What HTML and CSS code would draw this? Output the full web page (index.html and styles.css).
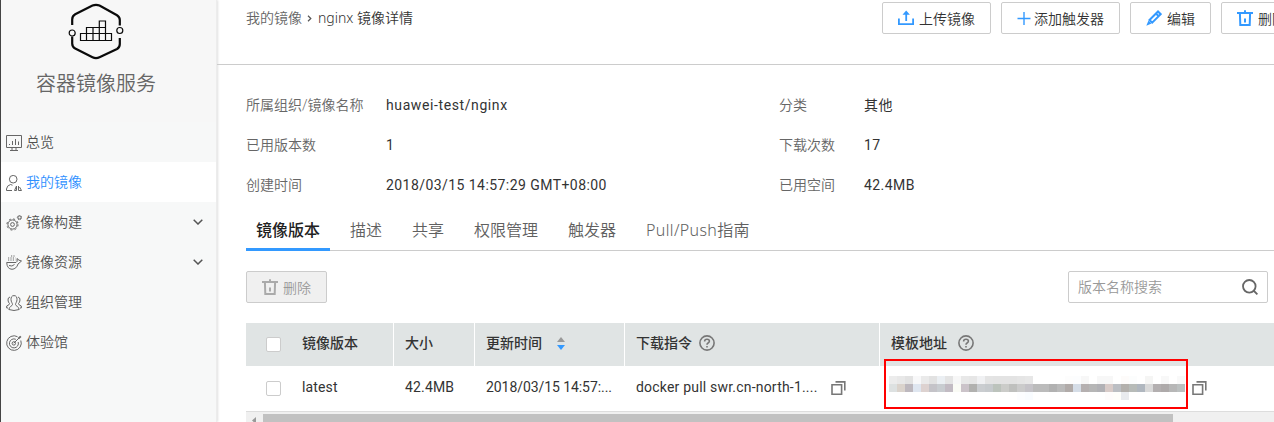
FILE: index.html
```html
<!DOCTYPE html>
<html lang="zh-CN">
<head>
<meta charset="utf-8">
<title>容器镜像服务</title>
<link rel="stylesheet" href="styles.css">
</head>
<body>
<div class="app">
  <aside class="sidebar">
    <div class="brand">
      <svg class="brand-logo" width="56" height="58" viewBox="0 0 56 58" fill="none" stroke="#0a0a0a">
        <path stroke-width="2.2" d="M4.2 22V16.5Q4.2 13 7.2 11.2L24.5 2.6Q28 1 31.5 2.6L49 12.2Q51.8 14 51.8 17V22.5M51.8 35V41Q51.8 44.500 49 46L31.500 54.200Q28 56 24.500 54.200L7.200 45.500Q4.200 44 4.200 40.500V33.500"/>
        <circle cx="4.200" cy="30" r="3" stroke-width="1.200"/>
        <circle cx="51.800" cy="27.500" r="3" stroke-width="1.200"/>
        <path stroke-width="1.200" d="M12.500 30.500H43.500V37.500H12.500ZM18.500 37.500V24.500H37.500V37.500M25 24.500V37.500M31.300 37.500V18H37.500V24.500"/>
      </svg>
      <h1 class="brand-name">容器镜像服务</h1>
    </div>
    <nav class="menu">
      <a class="menu-item">
        <svg class="menu-icon" viewBox="0 0 16 16"><path d="M.5.500H15.500V12.500H.5ZM4 15.500H12M6 12.500V15.500M10 12.500V15.500M3.500 10V9M6.500 10V6M9.500 10V4M12.500 10V6.500"/></svg>
        <span>总览</span>
      </a>
      <a class="menu-item active">
        <svg class="menu-icon" viewBox="0 0 16 16"><path d="M11 4.200A3.800 3.800 0 1 1 3.400 4.200A3.800 3.800 0 1 1 11 4.200M.5 15.500V14Q.8 10.500 4.500 9.500L6.500 10.200M.5 15.500H6M8.500 15.500L10.500 11V15.500ZM12.500 11V15.500H15.500L13.500 12"/></svg>
        <span>我的镜像</span>
      </a>
      <a class="menu-item">
        <svg class="menu-icon" viewBox="0 0 16 16"><circle cx="6.500" cy="9.500" r="4.600"/><circle cx="6.500" cy="9.500" r="1.900"/><circle cx="6.500" cy="9.500" r="5.600" stroke-dasharray="2 2.400"/><circle cx="13.500" cy="2.500" r="1.500"/><circle cx="13.500" cy="2.500" r="2.200" stroke-dasharray="1 .8"/></svg>
        <span>镜像构建</span>
        <svg class="menu-arrow" viewBox="0 0 10 6"><path d="M.7.700L5 5L9.300.700"/></svg>
      </a>
      <a class="menu-item">
        <svg class="menu-icon" viewBox="0 0 16 16"><path d="M.7 7.500H10Q11.800 7 11 3.500L13 5.200L15.500 6L12 9Q10.500 14 6 14.300Q1 14 .7 7.500ZM3 10.500Q6 12 8.500 9.500"/><path stroke-dasharray="1.200 1.200" d="M2 5H9.500M2 3H9.500M5 1H9.500"/></svg>
        <span>镜像资源</span>
        <svg class="menu-arrow" viewBox="0 0 10 6"><path d="M.7.700L5 5L9.300.700"/></svg>
      </a>
      <a class="menu-item">
        <svg class="menu-icon" viewBox="0 0 16 16"><path d="M8 .6C5.500.600 5 2.500 5 4.500C5 7 6.500 8 6.500 9.500C6.500 11 3 11.500 2.800 14.500Q8 16.500 13.200 14.500C13 11.500 9.500 11 9.500 9.500C9.500 8 11 7 11 4.500C11 2.500 10.500.6 8 .6ZM4 2Q1.800 2.500 2 5Q2.200 7.500 3.500 8.500Q3.500 10 .7 11V13H2M12 2Q14.200 2.500 14 5Q13.800 7.500 12.500 8.500Q12.500 10 15.300 11V13H14"/></svg>
        <span>组织管理</span>
      </a>
      <a class="menu-item">
        <svg class="menu-icon" viewBox="0 0 16 16"><path d="M11.500 1.700A7.300 7.300 0 1 0 14.800 5.500M9.800 4.300A4.500 4.500 0 1 0 12.200 7M7.800 8.200L13 3"/><circle cx="7.800" cy="8.400" r="1.700"/><path stroke-width="1.800" d="M12.300 3.700L14.800 1.300"/></svg>
        <span>体验馆</span>
      </a>
    </nav>
  </aside>

  <main class="content">
    <header class="topbar">
      <div class="breadcrumb">
        <a class="crumb">我的镜像</a>
        <svg class="crumb-sep" viewBox="0 0 5 7"><path d="M1 .8L3.800 3.500L1 6.200"/></svg>
        <span>nginx 镜像详情</span>
      </div>
      <div class="actions">
        <button class="btn"><svg class="btn-icon" viewBox="0 0 16 16"><path stroke-width="1.800" d="M.9 8.500V14.100H15.100V8.500M8.200 11V2.500"/><path class="solid" d="M8.200.500L4.500 4.800H11.900Z"/></svg>上传镜像</button>
        <button class="btn"><svg class="btn-icon plus" viewBox="0 0 14 16"><path stroke-width="1.400" d="M.5 8.500H13.500M7 2V15"/></svg>添加触发器</button>
        <button class="btn"><svg class="btn-icon" viewBox="0 0 16 16"><path stroke-width="2" d="M3.500 10L12 1.500L14.700 4.200L6.200 12.700ZM10 3.500L12.700 6.200"/><path class="solid" d="M2.500 10.500L5.500 13.500L.3 15.800Z"/></svg>编辑</button>
        <button class="btn"><svg class="btn-icon" viewBox="0 0 16 16"><path stroke-width="2" d="M0 2.900H16M8 .2V3M2.900 3L3.300 15H12.700L13.100 3M8 8.500V12.500"/></svg>删除</button>
      </div>
    </header>

    <section class="info">
      <span class="label">所属组织/镜像名称</span><span class="value name">huawei-test/nginx</span><span class="label">分类</span><span class="value">其他</span>
      <span class="label">已用版本数</span><span class="value">1</span><span class="label">下载次数</span><span class="value">17</span>
      <span class="label">创建时间</span><span class="value">2018/03/15 14:57:29 GMT+08:00</span><span class="label">已用空间</span><span class="value">42.4MB</span>
    </section>

    <div class="tabs">
      <a class="tab selected">镜像版本</a><a class="tab">描述</a><a class="tab">共享</a><a class="tab">权限管理</a><a class="tab">触发器</a><a class="tab guide">Pull/Push指南</a>
    </div>

    <div class="toolbar">
      <button class="btn disabled"><svg class="btn-icon" viewBox="0 0 16 16"><path stroke-width="2" d="M0 2.900H16M8 .2V3M2.900 3L3.300 15H12.700L13.100 3M8 8.500V12.500"/></svg>删除</button>
      <div class="search">
        <span>版本名称搜索</span>
        <svg class="search-icon" viewBox="0 0 16 16"><circle cx="7.300" cy="7.300" r="6.300"/><path d="M11.500 11.500L15.400 15.400"/></svg>
      </div>
    </div>

    <div class="table">
      <div class="row head">
        <div class="cell"><i class="checkbox"></i>镜像版本</div>
        <div class="cell">大小</div>
        <div class="cell">更新时间<svg class="sort" viewBox="0 0 8 13"><path fill="#999" d="M4 0L8 5H0Z"/><path fill="#3399ff" d="M0 8H8L4 13Z"/></svg></div>
        <div class="cell">下载指令<svg class="help" viewBox="0 0 16 16"><circle cx="8" cy="8" r="7.100"/><path d="M5.600 6.400Q5.600 4.200 8 4.200Q10.400 4.200 10.400 6.100Q10.400 7.300 9.100 8Q8 8.600 8 9.700M8 10.900V12.500"/></svg></div>
        <div class="cell">模板地址<svg class="help wide" viewBox="0 0 16 16"><circle cx="8" cy="8" r="7.100"/><path d="M5.600 6.400Q5.600 4.200 8 4.200Q10.400 4.200 10.400 6.100Q10.400 7.300 9.100 8Q8 8.600 8 9.700M8 10.900V12.500"/></svg></div>
      </div>
      <div class="row body">
        <div class="cell"><i class="checkbox"></i>latest</div>
        <div class="cell">42.4MB</div>
        <div class="cell date">2018/03/15 14:57:...</div>
        <div class="cell"><span class="command">docker pull swr.cn-north-1....</span><svg class="copy" viewBox="0 0 15 14"><path d="M1 3.800H10.600V13.200H1ZM4.500.900H13.800V9.500"/></svg></div>
        <div class="cell address">
          <svg class="mosaic" viewBox="0 0 37 3" shape-rendering="crispEdges"></svg>
          <svg class="copy" viewBox="0 0 15 14"><path d="M1 3.800H10.600V13.200H1ZM4.500.900H13.800V9.500"/></svg>
          <div class="highlight"></div>
        </div>
      </div>
      <div class="scrollbar"><svg class="scroll-arrow" viewBox="0 0 4 7"><path d="M4 0V7L0 3.500Z"/></svg><div class="thumb"></div></div>
    </div>
  </main>
</div>
<script src="mosaic.js"></script>
</body>
</html>
```
FILE: mosaic.js
```js
// Pixelated address: one colour per block, "-" leaves the block empty.
const rows = [
  "ececec e8e8e8 e2e2e2 f8f8f9 eaeaea e2e2e2 ebeff3 e4e4e4 f7f7f7 e8e8e8 e6e6e6 f0f1f3 e4e4e4 e3e3e3 e3e3e3 e3e3e3 e5e5e5 e7e7e7 - - - - fdfdfd fcfdfe f7f7f7 - f7f7f7 f7f7f7 - fdfbfa fcfdfd - f5f5f4 - f8f8f8 - f9f9f9",
  "dde1e1 dad3cc bdb8be dfe6f0 ddd2d0 c4c3c8 c8ccd0 c2bbc3 fafbf5 cbc3c9 b1b1af cacdd0 c6cacd bcc3bc cbccc9 bfc0be cbcbcb c5c3c8 bbbbbb bbbbbb b1b1b1 bababa b1aba9 d5dde7 b5b0b0 b6b6b6 b1b1b5 d8cbc8 bbbec3 b3b0ac b7bbb8 b0b7bf d9d9d9 b3afb0 aeaaaa b7b7b7 bcc0c0",
  "- - - - - - - - - - - - - - - - fcfdff f9fcff - - - - - - - - - fefcfc fefefb e9ebee"
];
const mosaic = document.querySelector(".mosaic");
rows.forEach((row, y) => row.split(" ").forEach((color, x) => {
  if (color === "-") return;
  const block = document.createElementNS("http://www.w3.org/2000/svg", "rect");
  block.setAttribute("x", x);
  block.setAttribute("y", y);
  block.setAttribute("width", 1);
  block.setAttribute("height", 1);
  block.setAttribute("fill", "#" + color);
  mosaic.appendChild(block);
}));
```
FILE: styles.css
```css
* { box-sizing: border-box; }
body {
  margin: 0;
  overflow: hidden;
  background: #fff;
  color: #333;
  font: 14px/20px Roboto, "Noto Sans CJK SC", sans-serif;
}
svg { flex: none; display: block; fill: none; }
.app { display: flex; width: 1274px; height: 422px; overflow: hidden; }

.sidebar {
  flex: none;
  width: 217px;
  border-left: 1px solid #444;
  border-right: 1px solid #ececec;
  background: #f7f8f8;
  box-shadow: 1px 0 2px rgba(0, 0, 0, .12);
}
.brand {
  height: 122px;
  padding: 3px 25px 0 0;
  display: flex;
  flex-direction: column;
  align-items: center;
  background: #f7f7f7;
}
.brand-name {
  margin: 7px 0 0;
  font: 350 20px/30px "Noto Sans CJK SC", sans-serif;
  color: #666;
}
.menu-item {
  height: 40px;
  padding: 0 13px 0 5px;
  display: flex;
  align-items: center;
  gap: 4px;
  font-weight: 350;
  color: #505050;
}
.menu-item.active { background: #fff; color: #2e8fff; }
.menu-icon { width: 16px; height: 16px; margin-top: 2px; stroke: #666; stroke-width: 1; }
.menu-arrow { width: 10px; height: 6px; margin-left: auto; stroke: #555; stroke-width: 1.500; }

.content { flex: 1; min-width: 0; padding-left: 29px; }
.topbar {
  height: 65px;
  margin-left: -29px;
  padding: 2px 0 0 29px;
  display: flex;
  border-bottom: 1px solid #ccc;
}
.breadcrumb {
  width: 636px;
  height: 32px;
  flex: none;
  display: flex;
  align-items: center;
  font-family: "Noto Sans", "Noto Sans CJK SC", sans-serif;
  font-weight: 350;
}
.crumb { color: #666; }
.crumb-sep { width: 5px; height: 7px; margin: 0 6px 0 5px; stroke: #555; stroke-width: 1.200; }
.actions { display: flex; gap: 10px; flex: none; }
.btn {
  height: 32px;
  padding: 0 15px;
  display: flex;
  align-items: center;
  gap: 5px;
  flex: none;
  border: 1px solid #ccc;
  border-radius: 2px;
  background: #fff;
  color: #333;
  font: 350 14px/20px "Noto Sans CJK SC", sans-serif;
}
.btn-icon { width: 16px; height: 16px; stroke: #3399ff; }
.btn-icon .solid { fill: #3399ff; stroke: none; }
.btn-icon.plus { width: 14px; margin-right: -2px; }
.btn.disabled { background: #f0f0f0; color: #999; }
.disabled .btn-icon { stroke: #aaa; }

.info {
  padding-top: 20px;
  display: grid;
  grid-template-columns: 140px 393px 85px 1fr;
  grid-auto-rows: 40px;
  align-items: center;
}
.label { color: #666; font-weight: 350; }
.value { letter-spacing: .44px; }
.value.name { letter-spacing: .6px; }

.tabs {
  height: 46px;
  display: flex;
  gap: 10px;
  border-bottom: 1px solid #ccc;
}
.tab {
  height: 46px;
  padding: 0 10px;
  font: 350 16px/50px "Noto Sans", "Noto Sans CJK SC", sans-serif;
  color: #606060;
}
.tab.selected { border-bottom: 3px solid #3399ff; color: #222; font-weight: 500; }
.tab.guide { letter-spacing: .35px; }

.toolbar { padding: 20px 6px 20px 0; display: flex; justify-content: space-between; }
.search {
  width: 200px;
  height: 32px;
  padding: 0 9px;
  display: flex;
  align-items: center;
  justify-content: space-between;
  border: 1px solid #ccc;
  border-radius: 2px;
  color: #999;
  font-weight: 350;
}
.search-icon { width: 16px; height: 16px; stroke: #666; stroke-width: 1.800; }

.row { display: grid; grid-template-columns: 148px 81px 150px 255px 1fr; }
.head { height: 43px; background: #e0e4e4; font-weight: 500; }
.body { height: 46px; border-bottom: 1px solid #ddd; letter-spacing: .15px; }
.cell { display: flex; align-items: center; padding: 0 0 4px 11px; white-space: nowrap; min-width: 0; }
.head .cell { border-right: 1px solid #fff; }
.head .cell:last-child { border-right: 0; }
.cell:first-child { padding-left: 20px; }
.date { letter-spacing: -.07px; }
.checkbox { width: 15px; height: 15px; margin: 4px 21px 0 0; border: 1px solid #ccc; border-radius: 2px; background: #fff; }
.sort { width: 8px; height: 13px; margin: 2px 0 0 15px; }
.help { width: 16px; height: 16px; margin: 1px 0 0 7px; stroke: #777; stroke-width: 1.600; }
.help.wide { margin-left: 11px; }
.command { width: 195px; letter-spacing: .2px; }
.copy { width: 15px; height: 14px; margin-top: 3px; stroke: #777; stroke-width: 1.600; }
.body .address { position: relative; padding: 0 0 1px 9px; }
.mosaic { width: 296px; height: 24px; }
.address .copy { margin: 0 0 0 7px; }
.highlight { position: absolute; left: 4px; top: -7px; width: 304px; height: 50px; border: 2px solid #ff0000; }
.scrollbar { height: 17px; padding: 2px 0 0 6px; display: flex; gap: 7px; background: #f0f0f0; }
.scroll-arrow { width: 4px; height: 7px; margin-top: 3px; fill: #999; }
.thumb { width: 910px; height: 13px; background: #c1c1c1; }
```
